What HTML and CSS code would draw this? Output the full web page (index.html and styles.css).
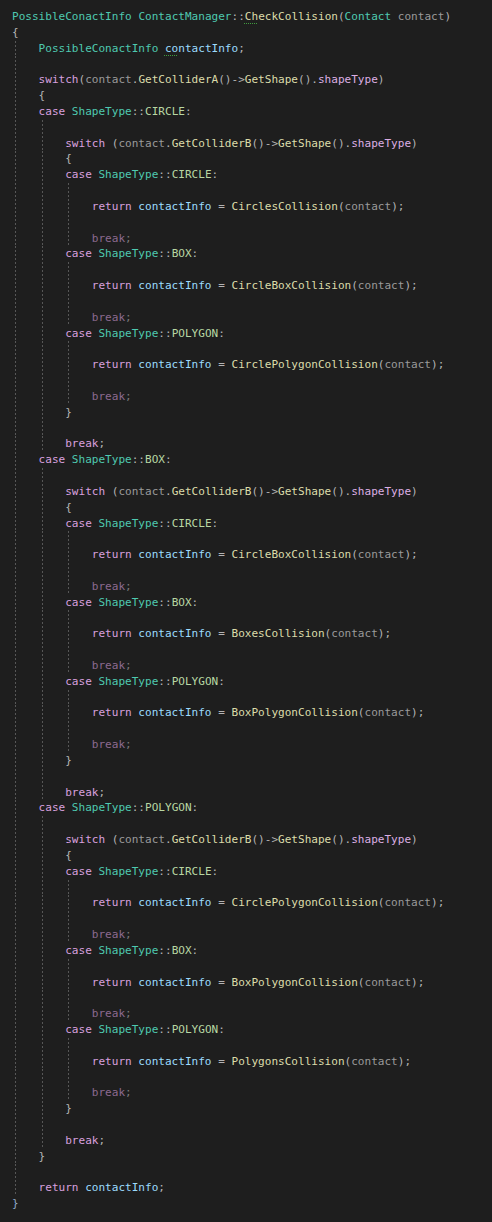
FILE: index.html
```html
<!DOCTYPE html>
<html lang="en">
<head>
  <meta charset="UTF-8" />
  <title>ContactManager.cpp</title>
  <link rel="stylesheet" href="styles.css">
</head>
<body>
  <div class="editor">
    <div class="ln"><span class="t">PossibleConactInfo</span> <span class="t">ContactManager</span><span class="o">::</span><span class="f"><u class="sq">Ch</u>eckCollision</span><span class="o">(</span><span class="t">Contact</span> <span class="p">contact</span><span class="o">)</span></div>
    <div class="ln"><span class="o">{</span></div>
    <div class="ln"><i class="g"></i><span class="t">PossibleConactInfo</span> <span class="v"><u class="sq">co</u>ntactInfo</span><span class="o">;</span></div>
    <div class="ln"><i class="g"></i></div>
    <div class="ln"><i class="g"></i><span class="k">switch</span><span class="o">(</span><span class="p">contact</span><span class="o">.</span><span class="f">GetColliderA</span><span class="o">()-&gt;</span><span class="f">GetShape</span><span class="o">().</span><span class="m">shapeType</span><span class="o">)</span></div>
    <div class="ln"><i class="g"></i><span class="o">{</span></div>
    <div class="ln"><i class="g"></i><span class="k">case</span> <span class="t">ShapeType</span><span class="o">::</span><span class="e">CIRCLE</span><span class="o">:</span></div>
    <div class="ln"><i class="g"></i><i class="g"></i></div>
    <div class="ln"><i class="g"></i><i class="g"></i><span class="k">switch</span> <span class="o">(</span><span class="p">contact</span><span class="o">.</span><span class="f">GetColliderB</span><span class="o">()-&gt;</span><span class="f">GetShape</span><span class="o">().</span><span class="m">shapeType</span><span class="o">)</span></div>
    <div class="ln"><i class="g"></i><i class="g"></i><span class="o">{</span></div>
    <div class="ln"><i class="g"></i><i class="g"></i><span class="k">case</span> <span class="t">ShapeType</span><span class="o">::</span><span class="e">CIRCLE</span><span class="o">:</span></div>
    <div class="ln"><i class="g"></i><i class="g"></i><i class="g"></i></div>
    <div class="ln"><i class="g"></i><i class="g"></i><i class="g"></i><span class="k">return</span> <span class="v">contactInfo</span> <span class="o">=</span> <span class="f">CirclesCollision</span><span class="o">(</span><span class="p">contact</span><span class="o">);</span></div>
    <div class="ln"><i class="g"></i><i class="g"></i><i class="g"></i></div>
    <div class="ln"><i class="g"></i><i class="g"></i><i class="g"></i><span class="d">break</span><span class="dp">;</span></div>
    <div class="ln"><i class="g"></i><i class="g"></i><span class="k">case</span> <span class="t">ShapeType</span><span class="o">::</span><span class="e">BOX</span><span class="o">:</span></div>
    <div class="ln"><i class="g"></i><i class="g"></i><i class="g"></i></div>
    <div class="ln"><i class="g"></i><i class="g"></i><i class="g"></i><span class="k">return</span> <span class="v">contactInfo</span> <span class="o">=</span> <span class="f">CircleBoxCollision</span><span class="o">(</span><span class="p">contact</span><span class="o">);</span></div>
    <div class="ln"><i class="g"></i><i class="g"></i><i class="g"></i></div>
    <div class="ln"><i class="g"></i><i class="g"></i><i class="g"></i><span class="d">break</span><span class="dp">;</span></div>
    <div class="ln"><i class="g"></i><i class="g"></i><span class="k">case</span> <span class="t">ShapeType</span><span class="o">::</span><span class="e">POLYGON</span><span class="o">:</span></div>
    <div class="ln"><i class="g"></i><i class="g"></i><i class="g"></i></div>
    <div class="ln"><i class="g"></i><i class="g"></i><i class="g"></i><span class="k">return</span> <span class="v">contactInfo</span> <span class="o">=</span> <span class="f">CirclePolygonCollision</span><span class="o">(</span><span class="p">contact</span><span class="o">);</span></div>
    <div class="ln"><i class="g"></i><i class="g"></i><i class="g"></i></div>
    <div class="ln"><i class="g"></i><i class="g"></i><i class="g"></i><span class="d">break</span><span class="dp">;</span></div>
    <div class="ln"><i class="g"></i><i class="g"></i><span class="o">}</span></div>
    <div class="ln"><i class="g"></i><i class="g"></i></div>
    <div class="ln"><i class="g"></i><i class="g"></i><span class="k">break</span><span class="o">;</span></div>
    <div class="ln"><i class="g"></i><span class="k">case</span> <span class="t">ShapeType</span><span class="o">::</span><span class="e">BOX</span><span class="o">:</span></div>
    <div class="ln"><i class="g"></i><i class="g"></i></div>
    <div class="ln"><i class="g"></i><i class="g"></i><span class="k">switch</span> <span class="o">(</span><span class="p">contact</span><span class="o">.</span><span class="f">GetColliderB</span><span class="o">()-&gt;</span><span class="f">GetShape</span><span class="o">().</span><span class="m">shapeType</span><span class="o">)</span></div>
    <div class="ln"><i class="g"></i><i class="g"></i><span class="o">{</span></div>
    <div class="ln"><i class="g"></i><i class="g"></i><span class="k">case</span> <span class="t">ShapeType</span><span class="o">::</span><span class="e">CIRCLE</span><span class="o">:</span></div>
    <div class="ln"><i class="g"></i><i class="g"></i><i class="g"></i></div>
    <div class="ln"><i class="g"></i><i class="g"></i><i class="g"></i><span class="k">return</span> <span class="v">contactInfo</span> <span class="o">=</span> <span class="f">CircleBoxCollision</span><span class="o">(</span><span class="p">contact</span><span class="o">);</span></div>
    <div class="ln"><i class="g"></i><i class="g"></i><i class="g"></i></div>
    <div class="ln"><i class="g"></i><i class="g"></i><i class="g"></i><span class="d">break</span><span class="dp">;</span></div>
    <div class="ln"><i class="g"></i><i class="g"></i><span class="k">case</span> <span class="t">ShapeType</span><span class="o">::</span><span class="e">BOX</span><span class="o">:</span></div>
    <div class="ln"><i class="g"></i><i class="g"></i><i class="g"></i></div>
    <div class="ln"><i class="g"></i><i class="g"></i><i class="g"></i><span class="k">return</span> <span class="v">contactInfo</span> <span class="o">=</span> <span class="f">BoxesCollision</span><span class="o">(</span><span class="p">contact</span><span class="o">);</span></div>
    <div class="ln"><i class="g"></i><i class="g"></i><i class="g"></i></div>
    <div class="ln"><i class="g"></i><i class="g"></i><i class="g"></i><span class="d">break</span><span class="dp">;</span></div>
    <div class="ln"><i class="g"></i><i class="g"></i><span class="k">case</span> <span class="t">ShapeType</span><span class="o">::</span><span class="e">POLYGON</span><span class="o">:</span></div>
    <div class="ln"><i class="g"></i><i class="g"></i><i class="g"></i></div>
    <div class="ln"><i class="g"></i><i class="g"></i><i class="g"></i><span class="k">return</span> <span class="v">contactInfo</span> <span class="o">=</span> <span class="f">BoxPolygonCollision</span><span class="o">(</span><span class="p">contact</span><span class="o">);</span></div>
    <div class="ln"><i class="g"></i><i class="g"></i><i class="g"></i></div>
    <div class="ln"><i class="g"></i><i class="g"></i><i class="g"></i><span class="d">break</span><span class="dp">;</span></div>
    <div class="ln"><i class="g"></i><i class="g"></i><span class="o">}</span></div>
    <div class="ln"><i class="g"></i><i class="g"></i></div>
    <div class="ln"><i class="g"></i><i class="g"></i><span class="k">break</span><span class="o">;</span></div>
    <div class="ln"><i class="g"></i><span class="k">case</span> <span class="t">ShapeType</span><span class="o">::</span><span class="e">POLYGON</span><span class="o">:</span></div>
    <div class="ln"><i class="g"></i><i class="g"></i></div>
    <div class="ln"><i class="g"></i><i class="g"></i><span class="k">switch</span> <span class="o">(</span><span class="p">contact</span><span class="o">.</span><span class="f">GetColliderB</span><span class="o">()-&gt;</span><span class="f">GetShape</span><span class="o">().</span><span class="m">shapeType</span><span class="o">)</span></div>
    <div class="ln"><i class="g"></i><i class="g"></i><span class="o">{</span></div>
    <div class="ln"><i class="g"></i><i class="g"></i><span class="k">case</span> <span class="t">ShapeType</span><span class="o">::</span><span class="e">CIRCLE</span><span class="o">:</span></div>
    <div class="ln"><i class="g"></i><i class="g"></i><i class="g"></i></div>
    <div class="ln"><i class="g"></i><i class="g"></i><i class="g"></i><span class="k">return</span> <span class="v">contactInfo</span> <span class="o">=</span> <span class="f">CirclePolygonCollision</span><span class="o">(</span><span class="p">contact</span><span class="o">);</span></div>
    <div class="ln"><i class="g"></i><i class="g"></i><i class="g"></i></div>
    <div class="ln"><i class="g"></i><i class="g"></i><i class="g"></i><span class="d">break</span><span class="dp">;</span></div>
    <div class="ln"><i class="g"></i><i class="g"></i><span class="k">case</span> <span class="t">ShapeType</span><span class="o">::</span><span class="e">BOX</span><span class="o">:</span></div>
    <div class="ln"><i class="g"></i><i class="g"></i><i class="g"></i></div>
    <div class="ln"><i class="g"></i><i class="g"></i><i class="g"></i><span class="k">return</span> <span class="v">contactInfo</span> <span class="o">=</span> <span class="f">BoxPolygonCollision</span><span class="o">(</span><span class="p">contact</span><span class="o">);</span></div>
    <div class="ln"><i class="g"></i><i class="g"></i><i class="g"></i></div>
    <div class="ln"><i class="g"></i><i class="g"></i><i class="g"></i><span class="d">break</span><span class="dp">;</span></div>
    <div class="ln"><i class="g"></i><i class="g"></i><span class="k">case</span> <span class="t">ShapeType</span><span class="o">::</span><span class="e">POLYGON</span><span class="o">:</span></div>
    <div class="ln"><i class="g"></i><i class="g"></i><i class="g"></i></div>
    <div class="ln"><i class="g"></i><i class="g"></i><i class="g"></i><span class="k">return</span> <span class="v">contactInfo</span> <span class="o">=</span> <span class="f">PolygonsCollision</span><span class="o">(</span><span class="p">contact</span><span class="o">);</span></div>
    <div class="ln"><i class="g"></i><i class="g"></i><i class="g"></i></div>
    <div class="ln"><i class="g"></i><i class="g"></i><i class="g"></i><span class="d">break</span><span class="dp">;</span></div>
    <div class="ln"><i class="g"></i><i class="g"></i><span class="o">}</span></div>
    <div class="ln"><i class="g"></i><i class="g"></i></div>
    <div class="ln"><i class="g"></i><i class="g"></i><span class="k">break</span><span class="o">;</span></div>
    <div class="ln"><i class="g"></i><span class="o">}</span></div>
    <div class="ln"><i class="g"></i></div>
    <div class="ln"><i class="g"></i><span class="k">return</span> <span class="v">contactInfo</span><span class="o">;</span></div>
    <div class="ln"><span class="o brace">}</span></div>
  </div>
</body>
</html>
```

FILE: styles.css
```css
html, body {
  margin: 0;
  padding: 0;
  background-color: #1e1e1e;
  overflow: hidden;
}

.editor {
  padding: 9px 0 0 12px;
  font-family: "DejaVu Sans Mono", "Liberation Mono", monospace;
  font-size: 11.05px;
  line-height: 15.84px;
  color: #dcdcdc;
}

.ln {
  height: 15.84px;
  white-space: pre;
}

/* indent guides */
.g {
  display: inline-block;
  width: 4ch;
  height: 15.84px;
  vertical-align: top;
  background-image: repeating-linear-gradient(to bottom, #575757 0 2px, transparent 2px 4px);
  background-repeat: no-repeat;
  background-position: 3px 0;
  background-size: 1px 100%;
}

.t { color: #4ec9b0; }
.f { color: #dcdcaa; }
.k { color: #d8a0df; }
.p { color: #9a9a9a; }
.v { color: #9cdcfe; }
.m { color: #dcaee3; }
.e { color: #b8d7a3; }
.o { color: #b4b4b4; }
.d { color: #8c6a8f; }
.dp { color: #7a7a7a; }

.brace {
  color: #8fa8c8;
}

.sq {
  text-decoration: underline dotted #3f9b3f;
  text-decoration-thickness: 1px;
  text-underline-offset: 3px;
}
```
